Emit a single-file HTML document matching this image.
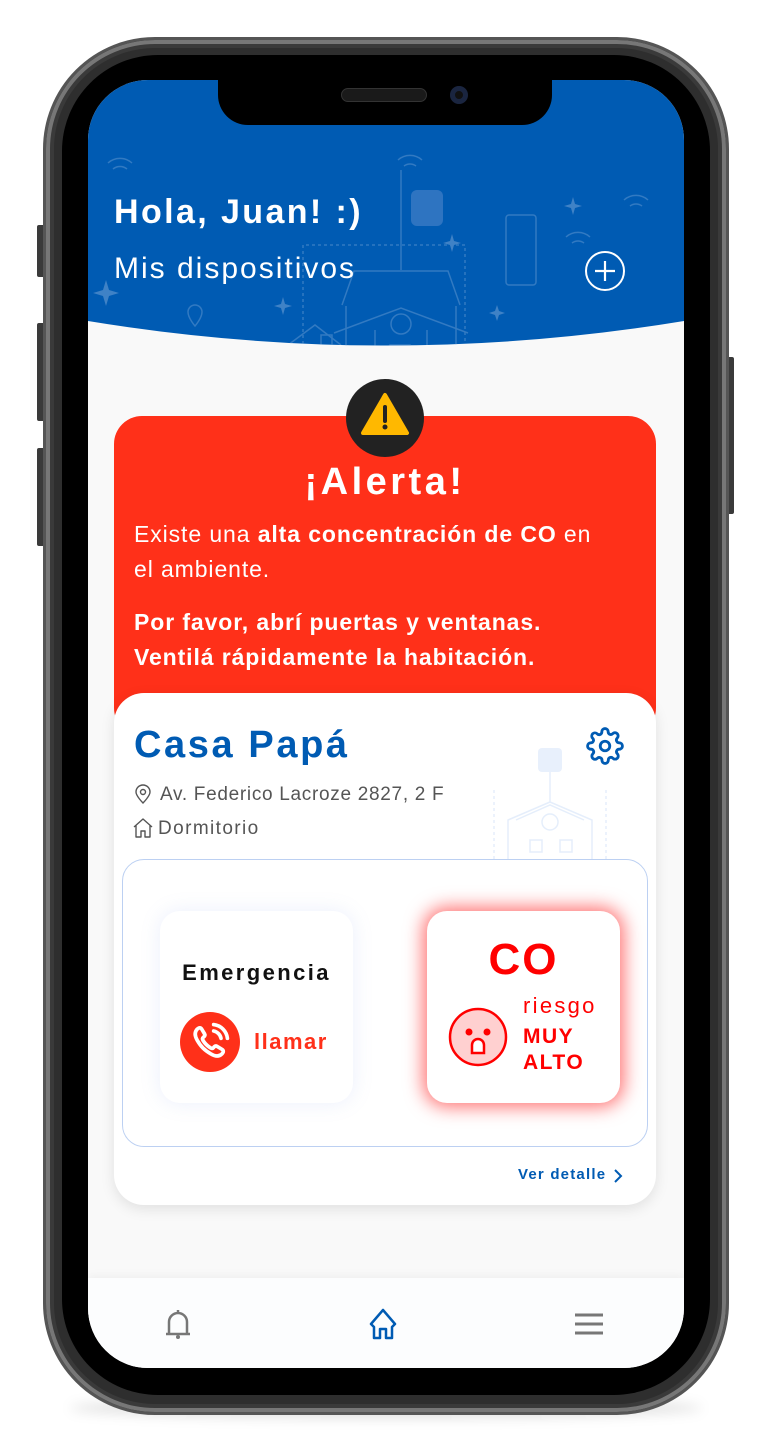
<!DOCTYPE html>
<html><head><meta charset="utf-8"><style>
*{margin:0;padding:0;box-sizing:border-box}
body{width:772px;height:1454px;background:#fff;position:relative;overflow:hidden;font-family:"Liberation Sans",sans-serif}
.abs{position:absolute;white-space:nowrap}
.btn{position:absolute;background:#3a3a3a;border-radius:2px}
</style></head><body>
<div class="abs" style="left:70px;top:1398px;width:632px;height:20px;border-radius:50%;background:rgba(0,0,0,0.12);filter:blur(6px)"></div>
<div class="btn" style="left:37px;top:225px;width:8px;height:52px"></div>
<div class="btn" style="left:37px;top:323px;width:8px;height:98px"></div>
<div class="btn" style="left:37px;top:448px;width:8px;height:98px"></div>
<div class="btn" style="left:726px;top:357px;width:8px;height:157px"></div>
<div class="abs" style="left:43px;top:37px;width:686px;height:1378px;border-radius:112px;background:#2e2e2e;border:3px solid #555;box-shadow:inset 0 0 0 4px #777,inset 0 0 0 8px #3a3a3a"></div>
<div class="abs" style="left:62px;top:55px;width:648px;height:1340px;border-radius:96px;background:#000"></div>
<div class="abs" style="left:88px;top:80px;width:596px;height:1288px;border-radius:60px;background:#f9f9f9;overflow:hidden">
  <svg class="abs" style="left:0;top:0" width="596" height="280" viewBox="0 0 596 280">
    <defs><clipPath id="c"><path d="M0 0H596V241Q298 290 0 241Z"/></clipPath></defs>
    <path d="M0 0H596V241Q298 290 0 241Z" fill="#005bb3"/>
    <g clip-path="url(#c)">
    <g fill="none" stroke="#3f82c6" stroke-width="1.5" opacity="0.8">
      <path d="M215 306V165H377V306" stroke-dasharray="3 3"/>
      <path d="M313 90V190"/>
      <path d="M254 225L266 191H360L372 225M258 226V280M368 226V280"/>
      <path d="M246 253L313 228L380 253M287 280V250M339 280V250"/>
      <circle cx="313" cy="244" r="10"/>
      <rect x="233" y="255" width="11" height="20"/><rect x="302" y="265" width="20" height="15"/>
      <path d="M200 265L227 245L253 265M206 265V280"/>
      <rect x="418" y="135" width="30" height="70" rx="3"/>
      <path d="M20 83a18 18 0 0 1 24 0M25 89a11 11 0 0 1 14 0M310 80a18 18 0 0 1 24 0M316 86a10 10 0 0 1 12 0M536 120a18 18 0 0 1 24 0M542 126a10 10 0 0 1 12 0M478 157a18 18 0 0 1 24 0M484 163a10 10 0 0 1 12 0"/>
      <path d="M100 232a7 7 0 0 1 14 0c0 6-7 14-7 14s-7-8-7-14z"/>
    </g>
    </g>
    <rect x="323" y="110" width="32" height="36" rx="6" fill="#3a7bc4" opacity="0.8"/>
    <g fill="#3f82c6"><path d="M18 200l3 10 10 3-10 3-3 10-3-10-10-3 10-3z"/><path d="M364 154l2 7 7 2-7 2-2 7-2-7-7-2 7-2z"/><path d="M485 117l2 7 7 2-7 2-2 7-2-7-7-2 7-2z"/><path d="M195 217l2 7 7 2-7 2-2 7-2-7-7-2 7-2z"/><path d="M409 225l2 6 6 2-6 2-2 6-2-6-6-2 6-2z"/></g>
    <circle cx="517" cy="191" r="19" fill="none" stroke="#fff" stroke-width="2"/>
    <path d="M517 181v20M507 191h20" stroke="#fff" stroke-width="2.2"/>
  </svg>
  <div class="abs" style="left:26px;top:113px;color:#fff;font-size:34px;font-weight:bold;letter-spacing:2.4px">Hola, Juan! :)</div>
  <div class="abs" style="left:26px;top:172px;color:#fff;font-size:30px;letter-spacing:2px">Mis dispositivos</div>
  <div class="abs" style="left:130px;top:0;width:334px;height:45px;background:#000;border-radius:0 0 30px 30px"></div>
  <div class="abs" style="left:253px;top:8px;width:86px;height:14px;background:#1a1a1a;border-radius:7px;border:1px solid #333"></div>
  <div class="abs" style="left:362px;top:6px;width:18px;height:18px;background:#111;border-radius:50%;box-shadow:inset 0 0 0 5px #1a2540"></div>

  <div class="abs" style="left:26px;top:336px;width:542px;height:320px;background:#ff3019;border-radius:28px"></div>
  <div class="abs" style="left:258px;top:299px;width:78px;height:78px;background:#222;border-radius:50%"></div>
  <svg class="abs" style="left:272px;top:311px" width="50" height="46" viewBox="0 0 50 46"><path d="M25 4L47 42H3Z" fill="#ffb800" stroke="#ffb800" stroke-width="4" stroke-linejoin="round"/><path d="M25 16v14" stroke="#222" stroke-width="4" stroke-linecap="round"/><circle cx="25" cy="36" r="2.5" fill="#222"/></svg>
  <div class="abs" style="left:26px;top:381px;width:542px;text-align:center;color:#fff;font-size:38px;font-weight:bold;letter-spacing:3.5px">¡Alerta!</div>
  <div class="abs" style="left:46px;top:437px;color:#fff;font-size:23px;line-height:35px;letter-spacing:0.9px">Existe una <b>alta concentración de CO</b> en<br>el ambiente.</div>
  <div class="abs" style="left:46px;top:525px;color:#fff;font-size:23px;line-height:35px;font-weight:bold;letter-spacing:0.9px">Por favor, abrí puertas y ventanas.<br>Ventilá rápidamente la habitación.</div>

  <div class="abs" style="left:26px;top:613px;width:542px;height:512px;background:#fff;border-radius:30px;box-shadow:0 4px 14px rgba(0,0,0,0.1)"></div>
  <svg class="abs" style="left:400px;top:660px" width="130" height="120" viewBox="0 0 130 120" fill="none" stroke="#e5eefb" stroke-width="1.5"><rect x="50" y="8" width="24" height="24" rx="4" fill="#e8f0fc" stroke="none"/><path d="M62 32v30M20 120V80l42-18 42 18v40M28 80l34-15 34 15M42 100h12v12H42zM72 100h12v12H72z"/><circle cx="62" cy="82" r="8"/><path d="M6 50V120M118 50V120" stroke-dasharray="3 3"/></svg>
  <div class="abs" style="left:46px;top:644px;color:#005bb3;font-size:38px;font-weight:bold;letter-spacing:2.6px">Casa Papá</div>
  <svg class="abs" style="left:498px;top:647px" width="38" height="38" viewBox="0 0 24 24" fill="none" stroke="#005bb3" stroke-width="1.8"><circle cx="12" cy="12" r="3"/><path d="M19.4 15a1.65 1.65 0 0 0 .33 1.820l.06.06a2 2 0 1 1-2.83 2.830l-.06-.06a1.65 1.65 0 0 0-1.820-.33 1.65 1.65 0 0 0-1 1.510V21a2 2 0 1 1-4 0v-.09A1.65 1.65 0 0 0 9 19.4a1.65 1.65 0 0 0-1.820.33l-.06.06a2 2 0 1 1-2.830-2.830l.06-.06A1.65 1.65 0 0 0 4.68 15a1.65 1.65 0 0 0-1.510-1H3a2 2 0 1 1 0-4h.09A1.65 1.65 0 0 0 4.6 9a1.65 1.65 0 0 0-.33-1.820l-.06-.06a2 2 0 1 1 2.830-2.830l.06.06A1.65 1.65 0 0 0 9 4.68a1.65 1.65 0 0 0 1-1.510V3a2 2 0 1 1 4 0v.09a1.65 1.65 0 0 0 1 1.510 1.65 1.65 0 0 0 1.820-.33l.06-.06a2 2 0 1 1 2.830 2.830l-.06.06A1.65 1.65 0 0 0 19.4 9a1.65 1.65 0 0 0 1.510 1H21a2 2 0 1 1 0 4h-.09a1.65 1.65 0 0 0-1.510 1z"/></svg>
  <svg class="abs" style="left:46px;top:704px" width="18" height="20" viewBox="0 0 18 20" fill="none" stroke="#555" stroke-width="1.4"><path d="M9 19s-7-7-7-11a7 7 0 0 1 14 0c0 4-7 11-7 11z"/><circle cx="9" cy="8" r="2.5"/></svg>
  <div class="abs" style="left:72px;top:704px;color:#555;font-size:19px;letter-spacing:0.7px">Av. Federico Lacroze 2827, 2 F</div>
  <svg class="abs" style="left:44px;top:737px" width="22" height="22" viewBox="0 0 22 22" fill="none" stroke="#555" stroke-width="1.4" stroke-linejoin="round"><path d="M2 10L11 2l9 8M4 8v12h5v-6h4v6h5V8"/></svg>
  <div class="abs" style="left:70px;top:738px;color:#555;font-size:19px;letter-spacing:1.4px">Dormitorio</div>

  <div class="abs" style="left:34px;top:779px;width:526px;height:288px;border:1px solid #bcd0f2;border-radius:22px"></div>
  <div class="abs" style="left:72px;top:831px;width:193px;height:192px;background:#fff;border-radius:20px;box-shadow:0 0 20px rgba(120,150,230,0.15)"></div>
  <div class="abs" style="left:72px;top:880px;width:193px;text-align:center;font-size:22px;font-weight:bold;color:#111;letter-spacing:2.4px">Emergencia</div>
  <div class="abs" style="left:92px;top:932px;width:60px;height:60px;background:#ff3019;border-radius:50%"></div>
  <svg class="abs" style="left:100px;top:940px" width="44" height="44" viewBox="0 0 24 24" fill="none" stroke="#fff" stroke-width="2" stroke-linecap="round"><path d="M5 5c1-1 2-1 2.5 0l1.5 2.5c.5.8 0 1.5-.7 2-.5.4-.5 1 0 1.8 1 1.6 2.300 2.800 3.800 3.800.8.5 1.400.5 1.800 0 .5-.7 1.200-1.200 2-.7L18.5 16c1 .5 1 1.500 0 2.500-1.500 1.500-3.500 1.500-6 0C9 16.500 7 14.500 5 11 3.600 8.600 3.600 6.500 5 5z"/><path d="M14 6a5 5 0 0 1 4 4M14 2.5a8.5 8.5 0 0 1 7.5 7.5"/></svg>
  <div class="abs" style="left:166px;top:949px;color:#ff3019;font-size:22px;font-weight:bold;letter-spacing:1.5px">llamar</div>

  <div class="abs" style="left:339px;top:831px;width:193px;height:192px;background:#fff;border-radius:20px;box-shadow:0 0 18px 4px rgba(255,0,0,0.55)"></div>
  <div class="abs" style="left:339px;top:855px;width:193px;text-align:center;color:#f00;font-size:44px;font-weight:bold;letter-spacing:2px">CO</div>
  <svg class="abs" style="left:360px;top:927px" width="60" height="60" viewBox="0 0 60 60"><circle cx="30" cy="30" r="28" fill="#ffd0d0" stroke="#f00" stroke-width="2.5"/><circle cx="21" cy="25" r="3.5" fill="#f00"/><circle cx="39" cy="25" r="3.5" fill="#f00"/><path d="M24 46V38a6 6 0 0 1 12 0v8z" fill="#fff" stroke="#f00" stroke-width="2.5"/></svg>
  <div class="abs" style="left:435px;top:913px;color:#f00;font-size:22px;letter-spacing:2.3px">riesgo</div>
  <div class="abs" style="left:435px;top:944px;color:#f00;font-size:21px;font-weight:bold;line-height:26px;letter-spacing:1.5px">MUY<br>ALTO</div>

  <div class="abs" style="left:430px;top:1086px;color:#005bb3;font-size:15px;font-weight:bold;letter-spacing:1.2px">Ver detalle</div>
  <svg class="abs" style="left:525px;top:1088px" width="10" height="16" viewBox="0 0 10 16"><path d="M2 2l6 6-6 6" fill="none" stroke="#005bb3" stroke-width="2"/></svg>

  <div class="abs" style="left:0;top:1198px;width:596px;height:90px;background:#fcfdfe;box-shadow:0 -3px 8px rgba(0,0,0,0.04)"></div>
  <svg class="abs" style="left:75px;top:1227px" width="30" height="34" viewBox="0 0 30 34" fill="none" stroke="#777" stroke-width="2.5"><path d="M15 3v3M6 27V15a9 9 0 0 1 18 0v12M3 27h24"/><circle cx="15" cy="30" r="2" fill="#777" stroke="none"/></svg>
  <svg class="abs" style="left:278px;top:1227px" width="34" height="34" viewBox="0 0 34 34" fill="none" stroke="#005bb3" stroke-width="2.5" stroke-linejoin="round"><path d="M17 3L5 17l3 3v11h6V22h6v9h6V20l3-3z"/></svg>
  <svg class="abs" style="left:485px;top:1232px" width="32" height="24" viewBox="0 0 32 24" stroke="#777" stroke-width="3"><path d="M2 3h28M2 12h28M2 21h28"/></svg>
</div>
</body></html>
